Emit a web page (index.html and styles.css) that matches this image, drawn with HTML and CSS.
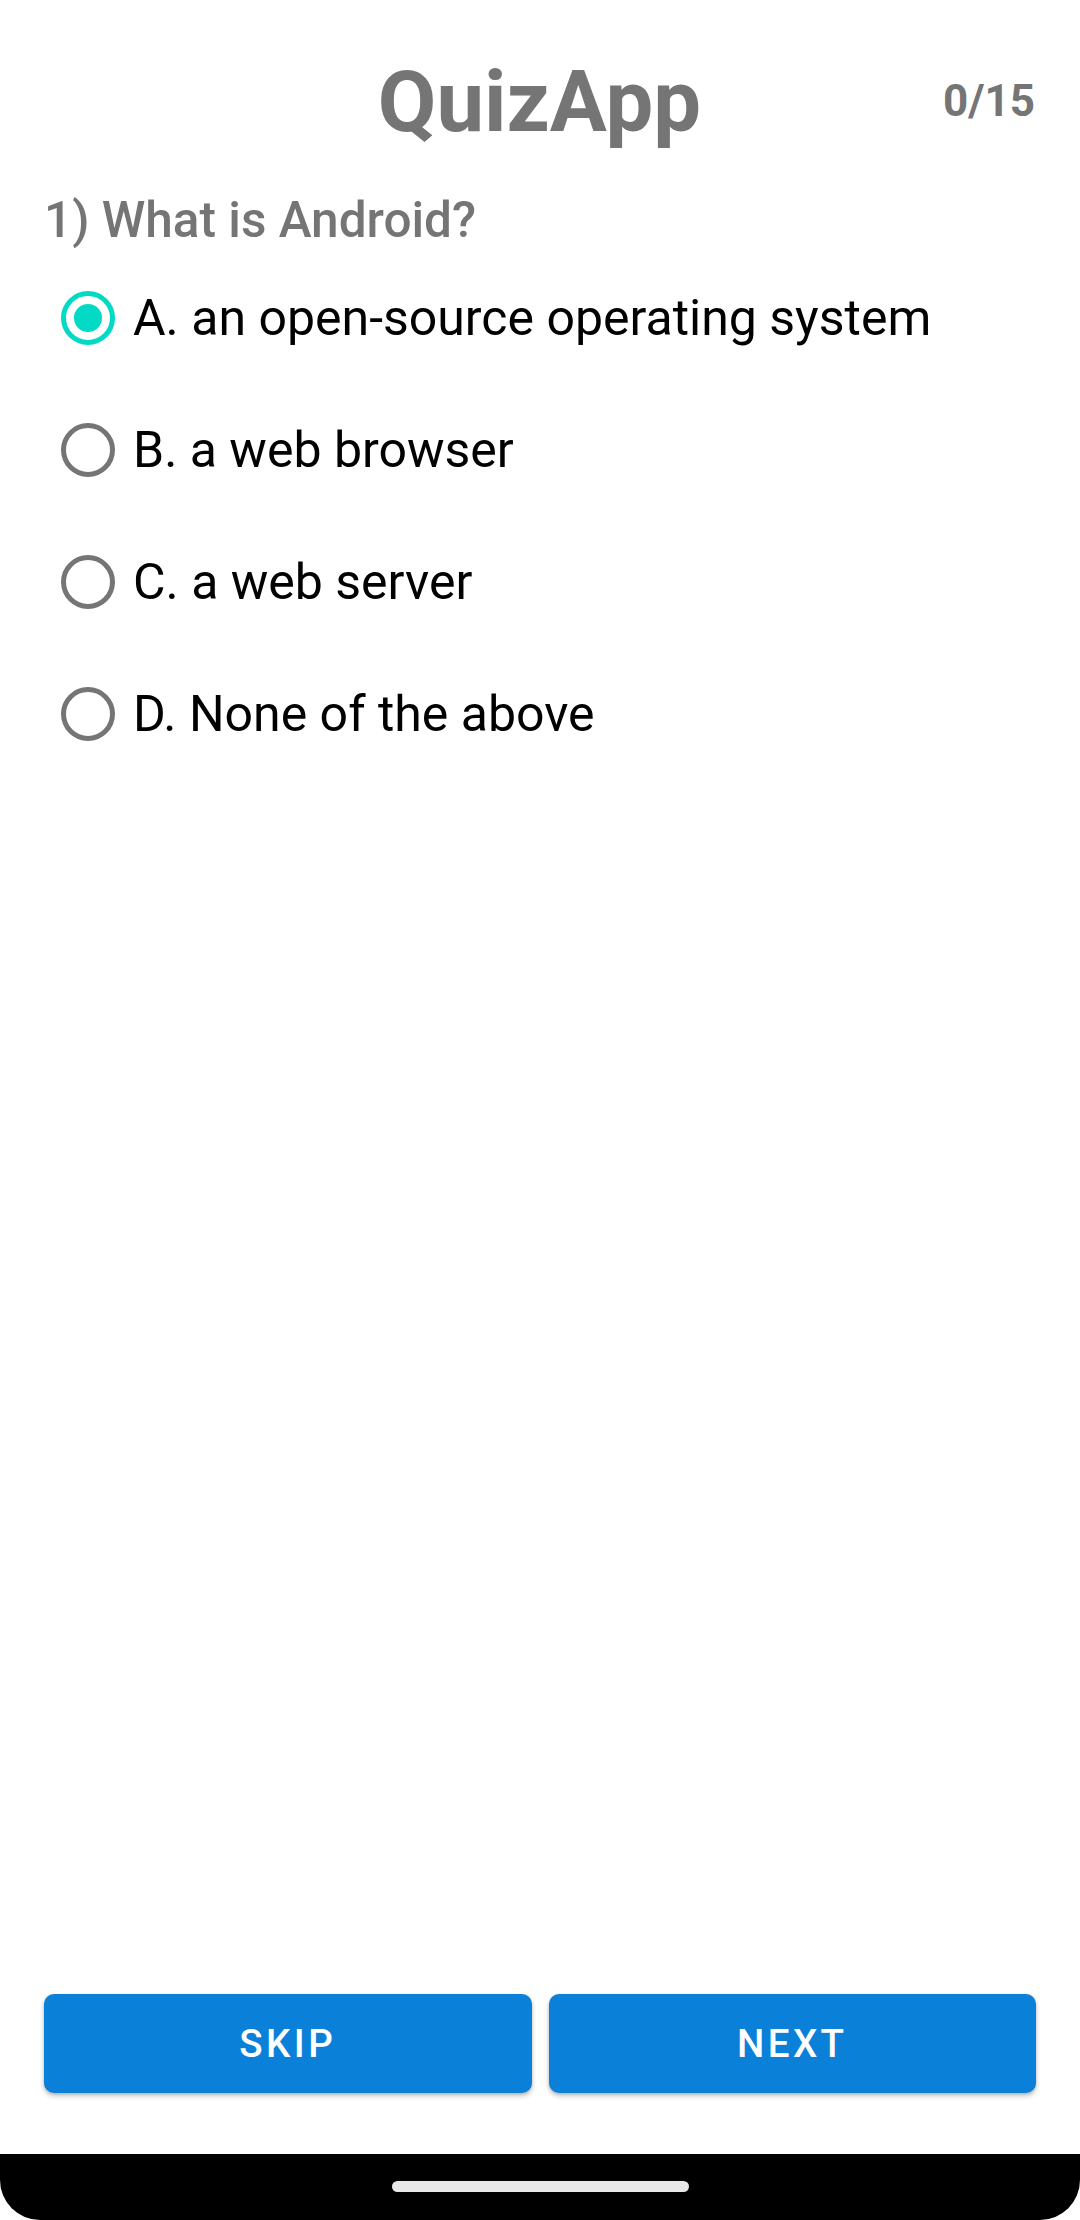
FILE: index.html
```html
<!DOCTYPE html>
<html>
<head>
<meta charset="utf-8">
<link rel="stylesheet" href="styles.css">
</head>
<body>
<div class="screen">
  <main class="content">
    <header class="header">
      <div class="spacer"></div>
      <h1 class="title">QuizApp</h1>
      <div class="counter">0/15</div>
    </header>
    <p class="question">1) What is Android?</p>
    <div class="options">
      <div class="option">
        <span class="radio checked"><span class="dot"></span></span>
        <span class="label">A. an open-source operating system</span>
      </div>
      <div class="option">
        <span class="radio"></span>
        <span class="label">B. a web browser</span>
      </div>
      <div class="option">
        <span class="radio"></span>
        <span class="label">C. a web server</span>
      </div>
      <div class="option">
        <span class="radio"></span>
        <span class="label">D. None of the above</span>
      </div>
    </div>
  </main>
  <footer class="actions">
    <button class="btn">SKIP</button>
    <button class="btn">NEXT</button>
  </footer>
  <div class="navbar"><span class="handle"></span></div>
</div>
</body>
</html>
```

FILE: styles.css
```css
html, body {
  margin: 0;
  padding: 0;
  background: #ffffff;
}
body {
  width: 1080px;
  height: 2220px;
  overflow: hidden;
  font-family: Roboto, "Noto Sans", "Liberation Sans", sans-serif;
}
.screen {
  display: flex;
  flex-direction: column;
  height: 2220px;
}
.content {
  flex: 1;
  display: flex;
  flex-direction: column;
}
.header {
  display: grid;
  grid-template-columns: 1fr auto 1fr;
  padding: 52px 45px 0 44px;
}
.title {
  margin: 0;
  font-size: 85px;
  line-height: 100px;
  font-weight: 700;
  color: #757575;
}
.counter {
  justify-self: end;
  align-self: start;
  margin-top: 23px;
  font-size: 44px;
  line-height: 52px;
  font-weight: 700;
  color: #757575;
}
.question {
  margin: 38px 0 2px 0;
  padding-left: 44px;
  font-size: 49.5px;
  line-height: 60px;
  font-weight: 500;
  color: #757575;
}
.options {
  display: flex;
  flex-direction: column;
}
.option {
  display: flex;
  align-items: center;
  height: 132px;
  padding-left: 61px;
}
.radio {
  box-sizing: border-box;
  width: 54px;
  height: 54px;
  border: 5.5px solid #757575;
  border-radius: 50%;
  display: flex;
  align-items: center;
  justify-content: center;
  flex: none;
}
.radio.checked {
  border-color: #03dac5;
}
.dot {
  width: 28px;
  height: 28px;
  border-radius: 50%;
  background: #03dac5;
}
.label {
  margin-left: 18px;
  font-size: 50px;
  line-height: 60px;
  color: #000000;
}
.actions {
  display: flex;
  gap: 17px;
  padding: 0 44px 61px 44px;
}
.btn {
  flex: 1;
  height: 99px;
  border: none;
  border-radius: 10px;
  background: #0a80d9;
  color: #ffffff;
  font-family: Roboto, "Noto Sans", sans-serif;
  font-size: 38.5px;
  font-weight: 500;
  letter-spacing: 0.089em;
  box-shadow: 0 3px 5px rgba(0,0,0,0.22), 0 1px 3px rgba(0,0,0,0.14);
  padding: 0;
}
.navbar {
  height: 66px;
  background: #000000;
  border-radius: 0 0 40px 40px;
  display: flex;
  justify-content: center;
  align-items: flex-start;
}
.handle {
  margin-top: 27px;
  width: 297px;
  height: 11px;
  border-radius: 6px;
  background: #e8e8e8;
}
```
